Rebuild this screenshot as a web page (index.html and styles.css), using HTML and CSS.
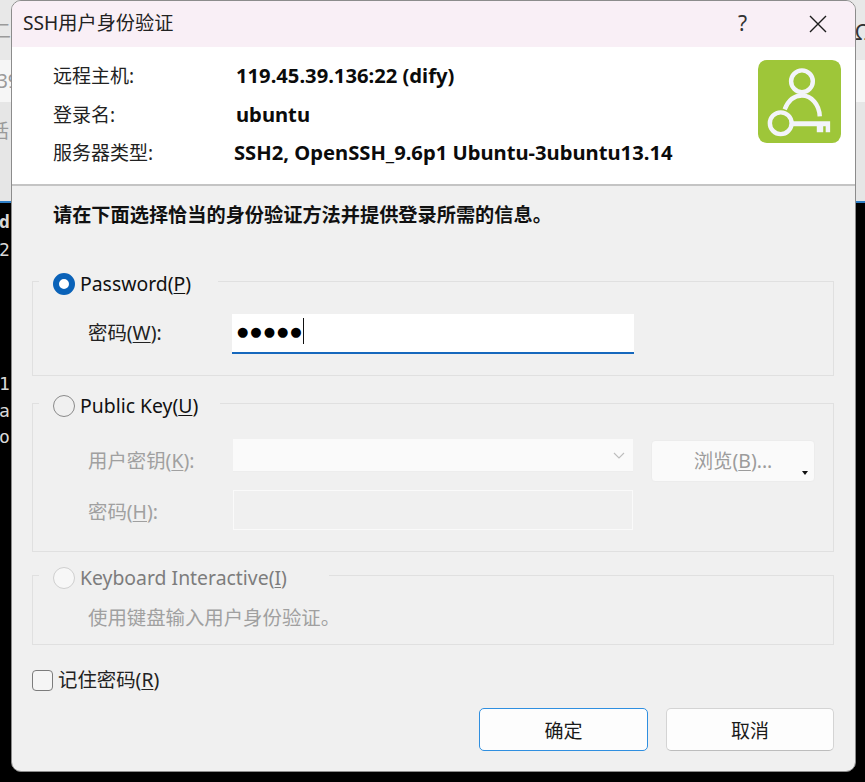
FILE: index.html
```html
<!DOCTYPE html>
<html lang="zh-CN">
<head>
<meta charset="utf-8">
<title>SSH用户身份验证</title>
<link rel="stylesheet" href="styles.css">
</head>
<body>
<div class="desktop">
  <div class="app-top">
    <div class="app-row row-a"><span>二</span><span class="far">Ω</span></div>
    <div class="app-row row-b"><span>39</span></div>
    <div class="app-row row-c"><span>话</span></div>
  </div>
  <div class="terminal">
    <div class="term-line l1">d</div>
    <div class="term-line l2">2</div>
    <div class="term-line l3">1</div>
    <div class="term-line l4">a</div>
    <div class="term-line l5">o</div>
  </div>

  <div class="dialog">
    <div class="titlebar">
      <span class="title">SSH用户身份验证</span>
      <span class="help">?</span>
      <svg class="close" width="18" height="18" viewBox="0 0 18 18"><path d="M1 1L17 17M17 1L1 17" stroke="#1c1c1c" stroke-width="1.4" fill="none"/></svg>
    </div>
    <div class="header">
      <div class="info">
        <div class="info-row"><span class="info-key">远程主机:</span><b class="info-val">119.45.39.136:22 (dify)</b></div>
        <div class="info-row"><span class="info-key">登录名:</span><b class="info-val">ubuntu</b></div>
        <div class="info-row"><span class="info-key">服务器类型:</span><b class="info-val val-shift">SSH2, OpenSSH_9.6p1 Ubuntu-3ubuntu13.14</b></div>
      </div>
      <svg class="logo" width="83" height="83" viewBox="0 0 84 84">
        <rect width="84" height="84" rx="9" fill="#9ec639"/>
        <g fill="none" stroke="#f3f4fa" stroke-width="4.500">
          <circle cx="44.5" cy="21.5" r="11"/>
          <path d="M27 50C31 40 38 36 44.5 36C54 36 62 45 62.5 57"/>
          <circle cx="23" cy="64" r="11"/>
        </g>
        <path d="M35 62H73V73H68.500V67H66V73H59.500V67H35Z" fill="#f3f4fa"/>
      </svg>
    </div>
    <div class="body">
      <p class="intro">请在下面选择恰当的身份验证方法并提供登录所需的信息。</p>

      <fieldset class="group group-pass">
        <legend class="legend"><span class="radio radio-on"></span>Password(<u>P</u>)</legend>
        <div class="field">
          <label class="field-label">密码(<u>W</u>):</label>
          <div class="pass-input"><span class="dots">●●●●●</span><span class="caret"></span></div>
        </div>
      </fieldset>

      <fieldset class="group group-key">
        <legend class="legend legend-key"><span class="radio"></span>Public Key(<u>U</u>)</legend>
        <div class="key-grid">
          <label class="field-label off label-a">用户密钥(<u>K</u>):</label>
          <div class="combo">
            <svg width="12" height="7" viewBox="0 0 12 7"><path d="M1 1L6 6L11 1" fill="none" stroke="#bdbdbd" stroke-width="1.100"/></svg>
          </div>
          <div class="browse">浏览(<u>B</u>)...<span class="mini-arrow"></span></div>
          <label class="field-label off label-b">密码(<u>H</u>):</label>
          <div class="off-input"></div>
        </div>
      </fieldset>

      <fieldset class="group group-kbd">
        <legend class="legend legend-kbd off-legend"><span class="radio radio-off"></span>Keyboard Interactive(<u>I</u>)</legend>
        <p class="kbd-note">使用键盘输入用户身份验证。</p>
      </fieldset>

      <div class="remember"><span class="check"></span>记住密码(<u>R</u>)</div>

      <div class="actions">
        <button class="btn btn-primary">确定</button>
        <button class="btn">取消</button>
      </div>
    </div>
  </div>
</div>
</body>
</html>
```

FILE: styles.css
```css
* { box-sizing: border-box; }
html, body { margin: 0; padding: 0; }
body { font-family: "Noto Sans", "Noto Sans CJK SC", sans-serif; font-size: 19px; color: #111; }

.desktop { position: relative; width: 865px; height: 782px; overflow: hidden; background: #000; display: flex; flex-direction: column; }

.app-top { height: 203px; flex: none; display: flex; flex-direction: column; background: #ececec; border-bottom: 2px solid #2f80c8; color: #9a9a9a; }
.app-row { display: flex; justify-content: space-between; overflow: hidden; }
.row-a { height: 60px; padding-top: 16px; background: #e8e8e8; margin-left: -8px; }
.row-a .far { font-size: 22px; margin-right: -6px; color: #333; }
.row-b { height: 42px; background: #f6f6f6; padding-top: 8px; margin-left: -3px; }
.row-c { flex: 1; background: #e6e6e6; padding-top: 14px; margin-left: -10px; }

.terminal { flex: 1; position: relative; color: #d8d8d8; font: 700 18px "DejaVu Sans Mono", monospace; }
.term-line { position: absolute; left: -1px; line-height: 20px; }
.l1 { top: 9px; }
.l2 { top: 37px; font-weight: 400; }
.l3 { top: 171px; font-weight: 400; }
.l4 { top: 198px; font-weight: 400; }
.l5 { top: 224px; font-weight: 400; }

.dialog { position: absolute; left: 11px; top: 0; width: 845px; height: 772px; border: 1px solid #8c8c8c; border-radius: 10px; background: #f0f0f0; overflow: hidden; display: flex; flex-direction: column; }

.titlebar { height: 46px; flex: none; display: flex; align-items: center; background: #f9eff6; padding-left: 11px; }
.title { font-size: 19.200px; color: #222; flex: 1; position: relative; top: -2px; }
.help { font-size: 21px; color: #333; margin-right: 62px; position: relative; top: -1px; }
.close { margin-right: 28px; }

.header { height: 139px; flex: none; display: flex; background: #fff; border-bottom: 2px solid #c4c4c4; padding: 9px 14px 0 41px; justify-content: space-between; }
.info { display: flex; flex-direction: column; }
.info-row { height: 38.500px; display: flex; align-items: center; }
.info-key { width: 183px; color: #222; }
.info-val { font-weight: 700; color: #0b0b0b; font-size: 20.200px; }
.val-shift { margin-left: -2px; }
.logo { flex: none; margin-top: 4px; }

.body { flex: 1; padding: 0 21px 0 20px; display: flex; flex-direction: column; }
.intro { margin: 16px 0 0 21px; font-weight: 700; font-size: 19.200px; line-height: 26px; color: #111; }

.group { margin: 0; border: 1px solid #e0e0e0; min-width: 0; padding: 0; display: block; flex: none; font-size: 19.400px; }
.legend { display: flex; align-items: center; padding: 6px 27px 0 14px; margin-left: 6px; height: 32px; line-height: 26px; }
.legend-key { padding-right: 22px; }
.legend-kbd { padding-right: 42px; }
.radio { width: 22px; height: 22px; border-radius: 50%; border: 1.500px solid #8a8a8a; background: #f0f0f0; margin-right: 5px; flex: none; }
.radio-on { border: 6px solid #0a62b8; background: #fff; }
.radio-off { border-color: #cfcfcf; background: #f7f7f7; }
.off-legend { color: #7d7d7d; }

.group-pass { margin-top: 37px; height: 111px; }
.field { display: flex; align-items: flex-start; margin: 17px 0 0 55px; }
.field-label { width: 144px; line-height: 28px; margin-top: 5px; color: #222; flex: none; }
.pass-input { width: 402px; height: 40px; background: #fff; border-bottom: 2px solid #1668bd; display: flex; align-items: center; padding: 0 0 4px 5px; }
.dots { font-size: 13px; letter-spacing: 2px; color: #000; font-family: "DejaVu Sans", sans-serif; }
.caret { width: 1px; height: 26px; background: #111; margin-left: -1px; }

.group-key { margin-top: 11px; height: 165px; }
.key-grid { display: grid; grid-template-columns: 145px 400px 164px; grid-template-rows: 51px 40px; margin: 20px 0 0 55px; }
.off { color: #a0a0a0; }
.field-label.label-a, .field-label.label-b { margin: 0; padding-top: 9px; line-height: 26px; }
.combo { height: 33px; background: #fafafa; border-bottom: 1px solid #ededed; display: flex; align-items: center; justify-content: flex-end; padding-right: 8px; }
.browse { position: relative; height: 42px; margin: 1px 0 0 18px; width: 164px; background: #fafafa; border: 1px solid #ececec; border-radius: 4px; text-align: center; line-height: 40px; color: #9c9c9c; }
.mini-arrow { position: absolute; right: 6px; bottom: 6px; width: 0; height: 0; border-left: 3px solid transparent; border-right: 3px solid transparent; border-top: 4px solid #111; }
.off-input { height: 40px; border: 1px solid #fafafa; background: #f0f0f0; }

.group-kbd { margin-top: 7px; height: 86px; }
.kbd-note { margin: 14px 0 0 55px; color: #a0a0a0; line-height: 26px; }

.remember { display: flex; align-items: center; margin-top: 23px; height: 24px; color: #222; line-height: 24px; flex: none; font-size: 19.400px; }
.check { width: 21px; height: 21px; border: 1.500px solid #7c7c7c; border-radius: 4px; background: #f5f5f5; margin-right: 5px; }

.actions { display: flex; justify-content: flex-end; gap: 18px; margin-top: 16px; }
.btn { width: 168px; height: 43px; border: 1px solid #d4d4d4; border-bottom-color: #bdbdbd; border-radius: 5px; background: #fdfdfd; font: 19px "Noto Sans", "Noto Sans CJK SC", sans-serif; color: #1a1a1a; padding: 0; }
.btn-primary { width: 169px; border: 1.500px solid #2f8fe0; }
u { text-underline-offset: 2px; }
```
